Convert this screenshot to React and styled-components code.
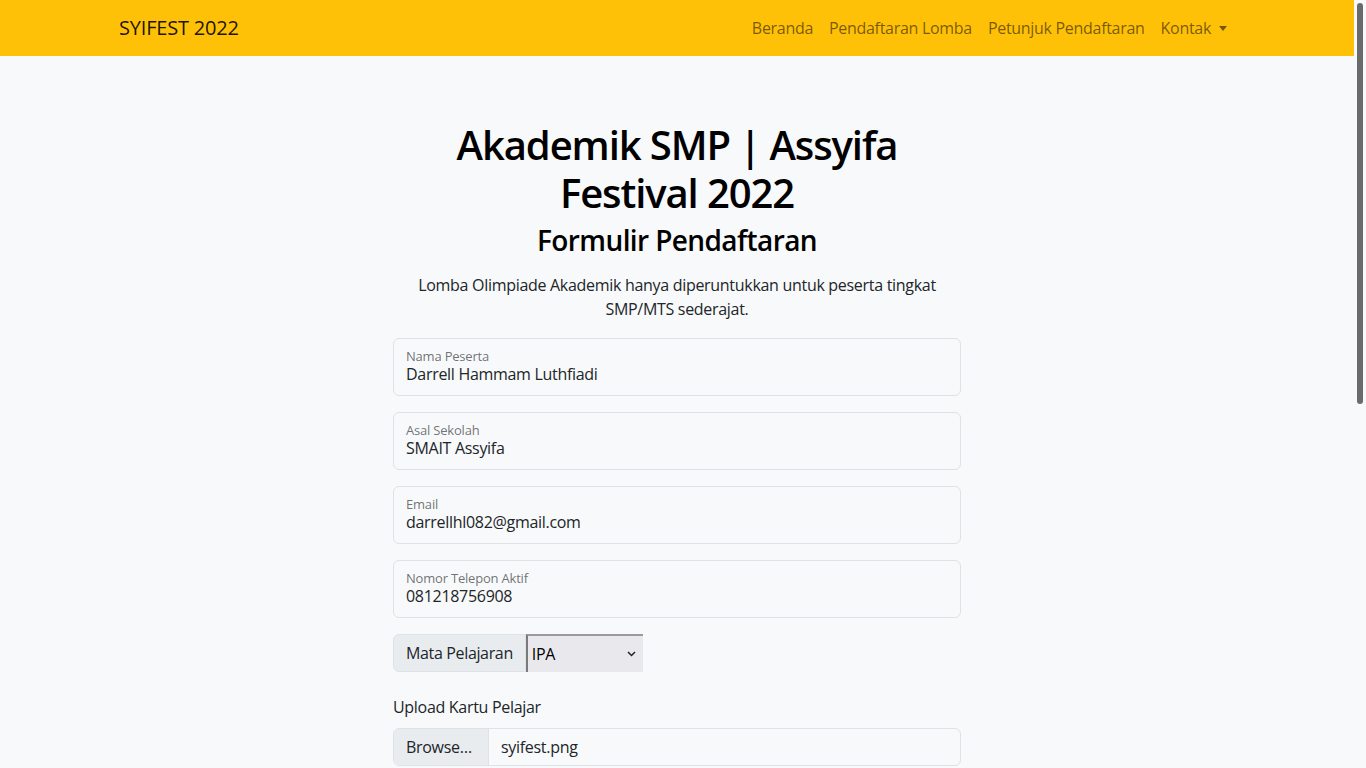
import styled, { createGlobalStyle } from "styled-components";

const GlobalStyle = createGlobalStyle`
  body {
    margin: 0;
    background: #f8f9fa;
    color: #212529;
    font-family: "Open Sans", "Noto Sans", sans-serif;
    font-size: 16px;
    line-height: 1.5;
  }
  * {
    box-sizing: border-box;
  }
`;

// Window shell: page area + the browser's scrollbar strip
const Shell = styled.div`
  display: flex;
  height: 100vh;
`;

const Page = styled.div`
  flex: 1;
  overflow-y: auto;
  scrollbar-width: none;
  &::-webkit-scrollbar {
    display: none;
  }
`;

const ScrollTrack = styled.div`
  width: 12px;
  padding: 3px;
  background: #f8f9fa;
`;

const ScrollThumb = styled.div`
  height: 401px;
  border-radius: 3px;
  background: #6b6b6b;
`;

// Top navbar
const Navbar = styled.nav`
  background: #ffc107;
  height: 56px;
  display: flex;
  align-items: center;
`;

const NavContainer = styled.div`
  width: 1140px;
  margin: 0 auto;
  padding: 0 12px;
  display: flex;
  align-items: center;
  justify-content: space-between;
`;

const Brand = styled.a`
  font-size: 20px;
  color: rgba(0, 0, 0, 0.9);
  text-decoration: none;
  letter-spacing: -0.2px;
`;

const NavList = styled.ul`
  list-style: none;
  margin: 0;
  padding: 0;
  display: flex;
`;

const NavLink = styled.a`
  display: flex;
  align-items: center;
  padding: 8px;
  color: rgba(0, 0, 0, 0.55);
  text-decoration: none;
  letter-spacing: -0.3px;
`;

const Caret = styled.span`
  display: inline-block;
  margin-left: 8px;
  border-top: 5px solid rgba(0, 0, 0, 0.55);
  border-left: 4px solid transparent;
  border-right: 4px solid transparent;
`;

// Main content
const Main = styled.main`
  padding: 65px 0 700px;
`;

const Column = styled.div`
  width: 568px;
  margin: 0 auto;
`;

const Title = styled.h1`
  margin: 0 0 7px;
  font-size: 40px;
  font-weight: 600;
  line-height: 1.2;
  text-align: center;
  color: #000;
  letter-spacing: -1.1px;
`;

const Subtitle = styled.h3`
  margin: 0 0 15px;
  font-size: 28px;
  font-weight: 600;
  line-height: 1.2;
  text-align: center;
  color: #000;
  letter-spacing: -0.6px;
`;

const Lead = styled.p`
  margin: 0 0 17px;
  text-align: center;
  padding: 0 20px;
  letter-spacing: -0.3px;
`;

const FloatingField = styled.label`
  display: flex;
  flex-direction: column;
  height: 58px;
  margin-bottom: 16px;
  padding: 9px 12px 0;
  border: 1px solid #dee2e6;
  border-radius: 6px;
  background: #f8f9fa;
`;

const FieldLabel = styled.span`
  font-size: 13px;
  line-height: 16px;
  color: rgba(33, 37, 41, 0.65);
  letter-spacing: -0.2px;
`;

const FieldInput = styled.input`
  border: none;
  outline: none;
  background: transparent;
  padding: 0;
  font: inherit;
  font-size: 16px;
  line-height: 20px;
  height: 20px;
  color: #212529;
  letter-spacing: -0.3px;
`;

const InputGroup = styled.div`
  display: flex;
  height: 38px;
  margin-bottom: 23px;
`;

const Addon = styled.span`
  display: flex;
  align-items: center;
  padding: 0 12px;
  background: #e9ecef;
  border: 1px solid #dee2e6;
  border-radius: 6px 0 0 6px;
  letter-spacing: -0.35px;
`;

const SelectWrap = styled.div`
  position: relative;
  width: 117px;
`;

const Select = styled.select`
  appearance: none;
  width: 100%;
  height: 100%;
  margin: 0;
  padding: 0 0 0 4px;
  background: #e9e9ed;
  border: none;
  border-top: 2px solid #9a9a9a;
  border-left: 2px solid #7a7a7a;
  border-radius: 0;
  font: inherit;
  font-size: 16px;
  color: #000;
  letter-spacing: -0.3px;
`;

const Chevron = styled.svg`
  position: absolute;
  right: 7px;
  top: 17px;
  pointer-events: none;
`;

const FormLabel = styled.div`
  margin-bottom: 9px;
  letter-spacing: -0.3px;
`;

const FileInput = styled.div`
  display: flex;
  height: 38px;
  border: 1px solid #dee2e6;
  border-radius: 6px;
  overflow: hidden;
  background: #f8f9fa;
`;

const FileButton = styled.span`
  display: flex;
  align-items: center;
  width: 95px;
  padding: 0 12px;
  background: #e9ecef;
  border-right: 1px solid #dee2e6;
  letter-spacing: -0.3px;
`;

const FileName = styled.span`
  display: flex;
  align-items: center;
  padding: 0 12px;
  letter-spacing: -0.3px;
`;

const fields = [
  { label: "Nama Peserta", value: "Darrell Hammam Luthfiadi" },
  { label: "Asal Sekolah", value: "SMAIT Assyifa" },
  { label: "Email", value: "darrellhl082@gmail.com" },
  { label: "Nomor Telepon Aktif", value: "081218756908" },
];

export default function App() {
  return (
    <Shell>
      <GlobalStyle />
      <Page>
        <Navbar>
          <NavContainer>
            <Brand href="#">SYIFEST 2022</Brand>
            <NavList>
              <li><NavLink href="#">Beranda</NavLink></li>
              <li><NavLink href="#">Pendaftaran Lomba</NavLink></li>
              <li><NavLink href="#">Petunjuk Pendaftaran</NavLink></li>
              <li>
                <NavLink href="#">
                  Kontak <Caret />
                </NavLink>
              </li>
            </NavList>
          </NavContainer>
        </Navbar>

        <Main>
          <Column>
            <Title>Akademik SMP | Assyifa Festival 2022</Title>
            <Subtitle>Formulir Pendaftaran</Subtitle>
            <Lead>
              Lomba Olimpiade Akademik hanya diperuntukkan untuk peserta tingkat
              SMP/MTS sederajat.
            </Lead>

            {fields.map((f) => (
              <FloatingField key={f.label}>
                <FieldLabel>{f.label}</FieldLabel>
                <FieldInput readOnly value={f.value} />
              </FloatingField>
            ))}

            <InputGroup>
              <Addon>Mata Pelajaran</Addon>
              <SelectWrap>
                <Select defaultValue="IPA">
                  <option>IPA</option>
                  <option>Matematika</option>
                </Select>
                <Chevron width="9" height="6" viewBox="0 0 9 6">
                  <path d="M1 1l3.5 3.5L8 1" fill="none" stroke="#222" strokeWidth="1.5" />
                </Chevron>
              </SelectWrap>
            </InputGroup>

            <FormLabel>Upload Kartu Pelajar</FormLabel>
            <FileInput>
              <FileButton>Browse…</FileButton>
              <FileName>syifest.png</FileName>
            </FileInput>
          </Column>
        </Main>
      </Page>
      <ScrollTrack>
        <ScrollThumb />
      </ScrollTrack>
    </Shell>
  );
}
